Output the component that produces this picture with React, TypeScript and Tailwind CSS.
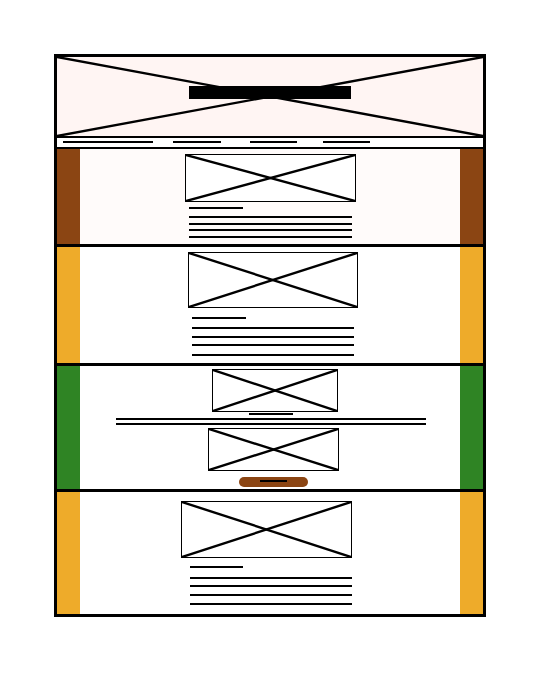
import React from "react";

const Cross = () => (
  <svg className="absolute inset-0 w-full h-full" viewBox="0 0 100 100" preserveAspectRatio="none">
    <line x1="0" y1="0" x2="100" y2="100" stroke="black" strokeWidth="2.4" vectorEffect="non-scaling-stroke" />
    <line x1="0" y1="100" x2="100" y2="0" stroke="black" strokeWidth="2.4" vectorEffect="non-scaling-stroke" />
  </svg>
);

function Placeholder({ className }: { className: string }) {
  return (
    <div className={`relative border-[1.5px] border-black bg-white ${className}`}>
      <Cross />
    </div>
  );
}

function Line({ className }: { className: string }) {
  return <div className={`h-[2px] bg-black ${className}`} />;
}

function Section({ side, bg, height, children }: { side: string; bg: string; height: string; children: React.ReactNode }) {
  return (
    <div className={`flex ${height}`}>
      <div className={`w-[23px] ${side}`} />
      <div className={`flex-1 flex flex-col ${bg}`}>{children}</div>
      <div className={`w-[23px] ${side}`} />
    </div>
  );
}

export default function App() {
  return (
    <div className="w-[542px] h-[678px] bg-white pt-[54px] pl-[54px]">
      <div className="w-[432px] border-[3px] border-black">
        {/* banner */}
        <div className="relative h-[79px] bg-[#fff5f3] flex justify-center pt-[29px]">
          <Cross />
          <div className="relative w-[162px] h-[13px] bg-black" />
        </div>
        {/* nav */}
        <div className="h-[13px] border-y-2 border-black bg-white flex items-start pt-[3px] pl-[6px]">
          <Line className="w-[90px]" />
          <Line className="w-[48px] ml-[20px]" />
          <Line className="w-[47px] ml-[29px]" />
          <Line className="w-[47px] ml-[26px]" />
        </div>

        <Section side="bg-[#8b4513]" bg="bg-[#fffbfa]" height="h-[95px]">
          <Placeholder className="ml-[105px] mt-[5px] w-[171px] h-[48px]" />
          <Line className="ml-[109px] mt-[5px] w-[54px]" />
          <Line className="ml-[109px] mt-[7px] w-[163px]" />
          <Line className="ml-[109px] mt-[5px] w-[163px]" />
          <Line className="ml-[109px] mt-[4px] w-[163px]" />
          <Line className="ml-[109px] mt-[5px] w-[163px]" />
        </Section>

        <div className="border-t-[3px] border-black">
          <Section side="bg-[#eeab2a]" bg="bg-white" height="h-[116px]">
            <Placeholder className="ml-[108px] mt-[5px] w-[170px] h-[56px]" />
            <Line className="ml-[112px] mt-[9px] w-[54px]" />
            <Line className="ml-[112px] mt-[8px] w-[162px]" />
            <Line className="ml-[112px] mt-[7px] w-[162px]" />
            <Line className="ml-[112px] mt-[6px] w-[162px]" />
            <Line className="ml-[112px] mt-[8px] w-[162px]" />
          </Section>
        </div>

        <div className="border-t-[3px] border-black">
          <Section side="bg-[#2f8424]" bg="bg-white" height="h-[123px]">
            <Placeholder className="ml-[132px] mt-[3px] w-[126px] h-[43px]" />
            <Line className="ml-[169px] mt-[1px] w-[44px]" />
            <Line className="ml-[36px] mt-[3px] w-[310px]" />
            <Line className="ml-[36px] mt-[3px] w-[310px]" />
            <Placeholder className="ml-[128px] mt-[3px] w-[131px] h-[43px]" />
            <div className="ml-[159px] mt-[6px] w-[69px] h-[10px] rounded-full bg-[#8b4513] pt-[3px] pl-[21px]">
              <Line className="w-[27px]" />
            </div>
          </Section>
        </div>

        <div className="border-t-[3px] border-black">
          <Section side="bg-[#eeab2a]" bg="bg-white" height="h-[122px]">
            <Placeholder className="ml-[101px] mt-[9px] w-[171px] h-[57px]" />
            <Line className="ml-[110px] mt-[8px] w-[53px]" />
            <Line className="ml-[110px] mt-[9px] w-[162px]" />
            <Line className="ml-[110px] mt-[6px] w-[162px]" />
            <Line className="ml-[110px] mt-[7px] w-[162px]" />
            <Line className="ml-[110px] mt-[7px] w-[162px]" />
          </Section>
        </div>
      </div>
    </div>
  );
}
